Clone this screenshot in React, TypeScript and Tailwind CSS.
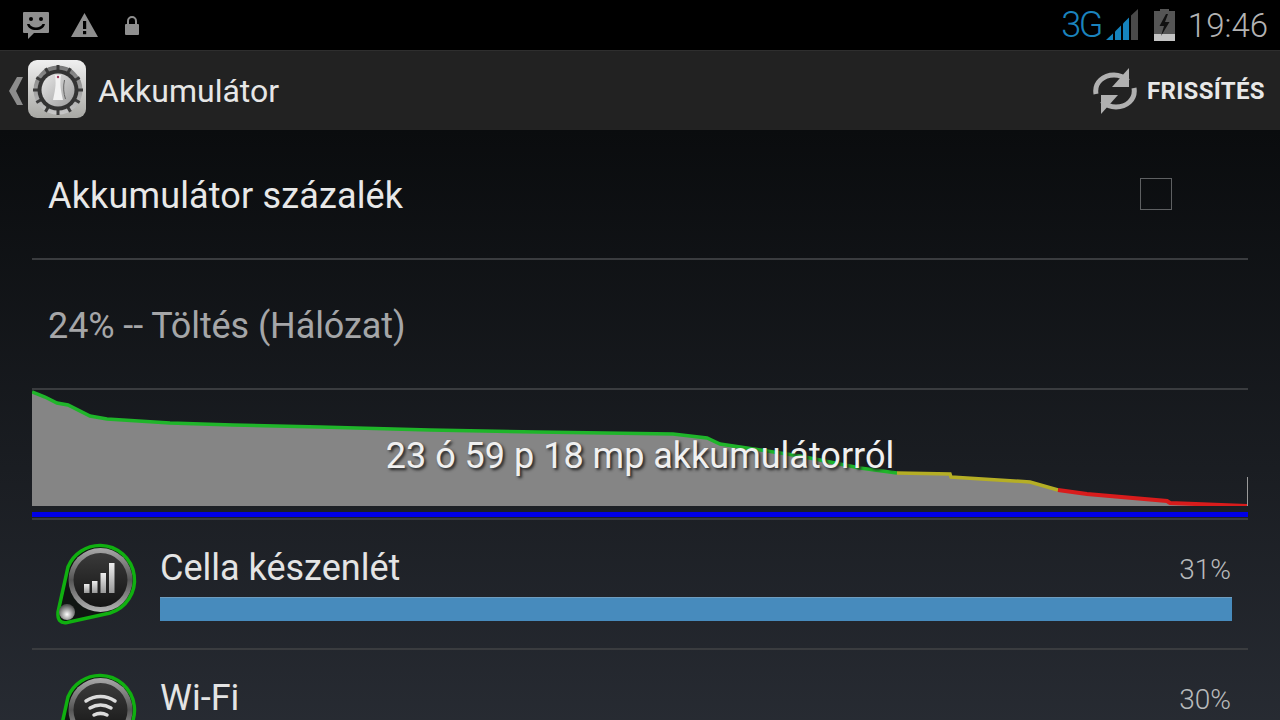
const font = { fontFamily: "Roboto, sans-serif" };

function StatusLeft() {
  return (
    <div className="flex items-center">
      <svg width="28" height="28" viewBox="0 0 28 28" className="ml-[22px]">
        <path d="M1 2a1 1 0 0 1 1-1h24a1 1 0 0 1 1 1v19a1 1 0 0 1-1 1H12l-6 6v-6H2a1 1 0 0 1-1-1z" fill="#8f8f8f" />
        <circle cx="9" cy="8" r="2" fill="#000" />
        <circle cx="19" cy="8" r="2" fill="#000" />
        <path d="M5 13h2.500c1 2.400 3.500 3.400 6.500 3.400s5.500-1 6.500-3.400H23c-1 4-4.400 6-9 6S6 17 5 13z" fill="#000" />
      </svg>
      <svg width="27" height="24" viewBox="0 0 27 24" className="ml-[21px]">
        <path d="M13.500 0 27 24H0z" fill="#8f8f8f" />
        <rect x="12" y="8" width="3.200" height="8" fill="#000" />
        <rect x="12" y="18" width="3.200" height="3.200" fill="#000" />
      </svg>
      <svg width="14" height="19" viewBox="0 0 14 19" className="ml-[27px]">
        <path d="M3 8V5a4 4 0 0 1 8 0v3" fill="none" stroke="#8f8f8f" strokeWidth="2" />
        <rect x="0" y="8" width="14" height="11" rx="1" fill="#8f8f8f" />
      </svg>
    </div>
  );
}

function StatusRight() {
  return (
    <div className="flex items-center">
      <span className="text-[36px] font-light text-[#1b83bd] leading-none tracking-[-2.500px]">3G</span>
      <svg width="32" height="32" viewBox="0 0 32 32" className="ml-[5px]">
        <path d="M0 31 7 24.500V31z" fill="#1583bd" />
        <path d="M9 22.500l6-6V31H9z" fill="#1583bd" />
        <path d="M17 14.500l6-6V31h-6z" fill="#1583bd" />
        <path d="M25 6.500 32 0v31h-7z" fill="#4a4a4a" />
      </svg>
      <svg width="21" height="32" viewBox="0 0 21 32" className="ml-[16px]">
        <rect x="6" y="0" width="9" height="3" fill="#555" />
        <rect x="0" y="2" width="21" height="23" fill="#555" />
        <rect x="0" y="25" width="21" height="7" fill="#c4c4c4" />
        <path d="M12 5 5.500 17h4.500l-3 10 8.500-14h-4.500l3-8z" fill="#111" />
      </svg>
      <span className="ml-[13px] text-[33px] font-light text-[#b3b3b3] leading-none">19:46</span>
    </div>
  );
}

function AppIcon() {
  const teeth = Array.from({ length: 12 }, (_, i) => i * 30);
  return (
    <svg width="58" height="58" viewBox="0 0 58 58">
      <defs>
        <linearGradient id="tile" x1="0" y1="0" x2="0" y2="1">
          <stop offset="0" stopColor="#f0f0f0" />
          <stop offset="1" stopColor="#a8a8a4" />
        </linearGradient>
        <linearGradient id="knob" x1="0" y1="0" x2="1" y2="1">
          <stop offset="0" stopColor="#e8e8e8" />
          <stop offset="1" stopColor="#9c9c9c" />
        </linearGradient>
        <linearGradient id="gear" x1="0" y1="0" x2="0" y2="1">
          <stop offset="0" stopColor="#777" />
          <stop offset="1" stopColor="#c8c8c8" />
        </linearGradient>
      </defs>
      <rect width="58" height="58" rx="9" fill="url(#tile)" />
      <circle cx="30" cy="30" r="24.500" fill="url(#gear)" />
      {teeth.map((a) => (
        <rect key={a} x="28.500" y="5" width="3" height="6" fill="#3a3a3a" transform={`rotate(${a} 30 30)`} />
      ))}
      <circle cx="30" cy="30" r="20.500" fill="#333" />
      <circle cx="30" cy="30" r="16.500" fill="url(#knob)" />
      <path d="M27 15h6c-1 8-1 12 2 25H25c3-13 3-17 2-25z" fill="#f2f2f2" />
      <path d="M36.500 20c-1.500 7-1 13 1 19" fill="none" stroke="#666" strokeWidth="1" />
      <circle cx="30" cy="17" r="1.200" fill="#a03c60" />
    </svg>
  );
}

function Divider() {
  return <div className="mx-8 h-[2px] bg-[#3a3c3f]" />;
}

function UsageIcon({ wifi }: { wifi?: boolean }) {
  return (
    <svg width="84" height="84" viewBox="0 0 84 84" className="shrink-0">
      <defs>
        <linearGradient id="ring" x1="0" y1="0" x2="0" y2="1">
          <stop offset="0" stopColor="#a9a9a9" />
          <stop offset="0.5" stopColor="#555" />
          <stop offset="1" stopColor="#b5b5b5" />
        </linearGradient>
        <linearGradient id="face" x1="0" y1="0" x2="0" y2="1">
          <stop offset="0" stopColor="#3a3a3a" />
          <stop offset="1" stopColor="#141414" />
        </linearGradient>
        <linearGradient id="bar" x1="0" y1="0" x2="0" y2="1">
          <stop offset="0" stopColor="#eee" />
          <stop offset="1" stopColor="#999" />
        </linearGradient>
        <radialGradient id="ball" cx="0.500" cy="0.650" r="0.600">
          <stop offset="0" stopColor="#fff" />
          <stop offset="1" stopColor="#505050" />
        </radialGradient>
      </defs>
      <path
        d="M46.500 3.500A34.500 34.500 0 0 1 56 71L13 80.500Q3 82 4 70L14 25A34.500 34.500 0 0 1 46.500 3.500Z"
        fill="#101512"
        stroke="#10b010"
        strokeWidth="3.500"
      />
      <circle cx="46.500" cy="38" r="32" fill="url(#ring)" />
      <circle cx="46.500" cy="38" r="27" fill="url(#face)" />
      {wifi ? (
        <g fill="none" stroke="#dcdcdc" strokeWidth="3.500" strokeLinecap="round">
          <path d="M32 29c9-6 20-6 29 0" />
          <path d="M36 36c7-4 14-4 21 0" />
          <path d="M40 43c4-2 9-2 13 0" />
          <circle cx="46.500" cy="53" r="5" fill="#bbb" stroke="none" />
        </g>
      ) : (
        <g fill="url(#bar)">
          <rect x="30" y="42" width="5.500" height="9" />
          <rect x="38" y="39" width="5.500" height="12" />
          <rect x="46.500" y="31" width="5.500" height="20" />
          <rect x="55" y="21" width="5.500" height="30" />
        </g>
      )}
      <circle cx="13" cy="70" r="8" fill="url(#ball)" />
    </svg>
  );
}

function UsageRow({ name, pct, wifi }: { name: string; pct: string; wifi?: boolean }) {
  return (
    <div className="flex h-[128px] shrink-0 pt-[22px] pl-[54px] pr-12">
      <UsageIcon wifi={wifi} />
      <div className="ml-[22px] flex-1">
        <div className="flex h-[55px] items-start justify-between">
          <span className="mt-[2px] text-[36px] leading-[48px] text-[#e4e4e4]">{name}</span>
          <span className="mr-[1px] mt-[10px] text-[28px] leading-[36px] font-light text-[#b8babc]">{pct}</span>
        </div>
        <div className="h-[24px] border-t border-t-[#6f9dbf] bg-[#478bbd]" />
      </div>
    </div>
  );
}

function Chart() {
  const pts = {
    green:
      "32,392 45,397 57,403 68,405 90,416 107,419 170,423 233,425 320,427 430,430 537,432 673,434 707,438 720,444 800,456 860,468 897,473",
    yellow: "897,473 950,474 951,477 1030,482 1058,490",
    red: "1058,490 1087,494 1167,501 1170,503 1247,506",
  };
  const shift = (s: string) =>
    s
      .split(" ")
      .map((p) => {
        const [x, y] = p.split(",").map(Number);
        return `${x - 32},${y - 390}`;
      })
      .join(" ");
  const area = `0,116 ${shift(pts.green)} ${shift(pts.yellow)} ${shift(pts.red)} 1216,116`;
  return (
    <div className="relative mx-8 h-[116px]">
      <svg width="1216" height="116" viewBox="0 0 1216 116" className="block">
        <polygon points={area} fill="#858585" />
        <line x1="1215.500" y1="87" x2="1215.500" y2="116" stroke="#9a9a9a" />
        <polyline points={shift(pts.green)} fill="none" stroke="#1fb52a" strokeWidth="3.500" />
        <polyline points={shift(pts.yellow)} fill="none" stroke="#b5ae25" strokeWidth="3.500" />
        <polyline points={shift(pts.red)} fill="none" stroke="#d81c1c" strokeWidth="4" />
      </svg>
      <div className="absolute inset-x-0 top-[42px] text-center text-[36px] leading-[48px] text-[#f0f0f0] [text-shadow:2px_2px_3px_#222]">
        23 ó 59 p 18 mp akkumulátorról
      </div>
    </div>
  );
}

export default function App() {
  return (
    <div style={font} className="flex h-[720px] w-[1280px] flex-col overflow-hidden bg-black">
      <div className="flex h-[50px] shrink-0 items-center justify-between pr-[12px]">
        <StatusLeft />
        <StatusRight />
      </div>
      <div className="flex h-[80px] shrink-0 items-center justify-between border-t border-t-[#2e2e2e] bg-[#222222] pr-[15px]">
        <div className="flex items-center">
          <svg width="14" height="28" viewBox="0 0 14 28" className="ml-[9px]">
            <path d="M14 0H8L0 14l8 14h6L7 14z" fill="#8c8c8c" />
          </svg>
          <div className="mb-[4px] ml-[5px]">
            <AppIcon />
          </div>
          <span className="ml-[12px] text-[32px] leading-none text-[#e6e6e6]">Akkumulátor</span>
        </div>
        <div className="flex items-center">
          <svg width="46" height="48" viewBox="0 0 46 48">
            <g fill="none" stroke="#b0b0b0" strokeWidth="5">
              <path d="M4 27C2 15 12 8 22 8c6 0 10 2 14 6" />
              <path d="M42 21c2 12-8 19-18 19-6 0-10-2-14-6" />
            </g>
            <path d="M37 1v19H20z" fill="#b0b0b0" />
            <path d="M9 47V28h17z" fill="#b0b0b0" />
          </svg>
          <span className="ml-[9px] text-[24px] font-bold leading-none tracking-[0.350px] text-[#e8e8e8]">FRISSÍTÉS</span>
        </div>
      </div>
      <div className="flex flex-1 flex-col bg-gradient-to-b from-[#0a0c0e] to-[#2a2e36]">
        <div className="flex h-[128px] shrink-0 items-center justify-between pl-12 pr-[108px]">
          <span className="mt-[4px] text-[36px] leading-[48px] tracking-[0.150px] text-[#e8e8e8]">Akkumulátor százalék</span>
          <div className="h-8 w-8 border border-[#5e6062]" />
        </div>
        <Divider />
        <div className="flex h-[128px] shrink-0 items-center pl-12">
          <span className="mt-[4px] text-[36px] leading-[48px] tracking-[-0.100px] text-[#a5a6a8]">24% -- Töltés (Hálózat)</span>
        </div>
        <Divider />
        <Chart />
        <div className="mx-8 mt-[6px] h-[5px] bg-[#0000e6]" />
        <div className="mt-[1px]">
          <Divider />
        </div>
        <UsageRow name="Cella készenlét" pct="31%" />
        <Divider />
        <UsageRow name="Wi-Fi" pct="30%" wifi />
      </div>
    </div>
  );
}
